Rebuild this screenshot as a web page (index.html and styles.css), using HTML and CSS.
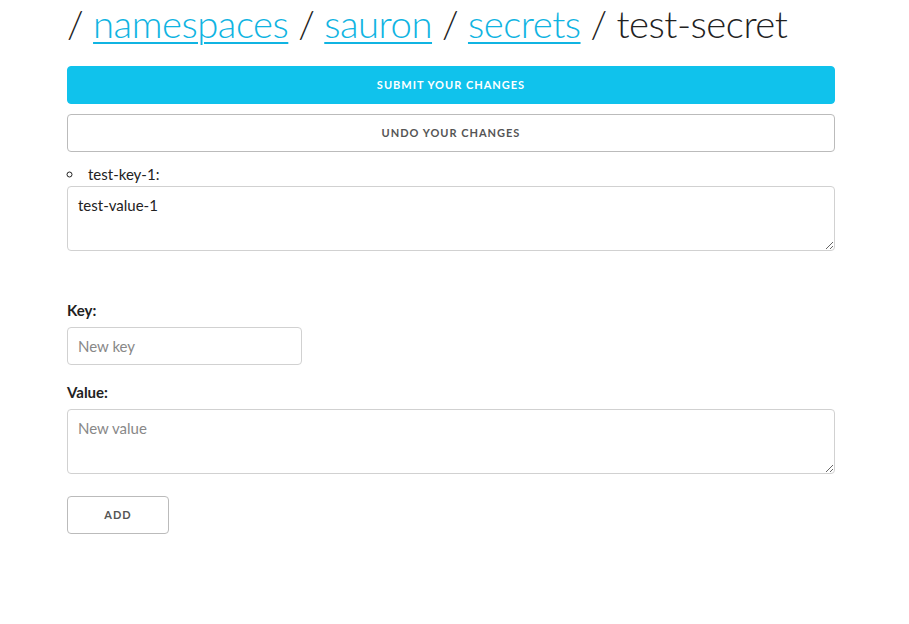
FILE: index.html
```html
<!DOCTYPE html>
<html>
<head>
<meta charset="utf-8">
<link rel="stylesheet" href="styles.css">
</head>
<body>
<div class="container">
  <h1 class="title">/ <a href="#">namespaces</a> / <a href="#">sauron</a> / <a href="#">secrets</a> / test-secret</h1>
  <button class="btn btn-primary">Submit your changes</button>
  <button class="btn">Undo your changes</button>
  <ul class="entries">
    <li>test-key-1:
      <textarea class="field field-area">test-value-1</textarea>
    </li>
  </ul>
  <form class="add-form">
    <label class="lbl">Key:</label>
    <input class="field field-key" type="text" placeholder="New key">
    <label class="lbl">Value:</label>
    <textarea class="field field-area" placeholder="New value"></textarea>
    <button type="button" class="btn btn-small">Add</button>
  </form>
</div>
</body>
</html>
```
FILE: styles.css
```css
html, body {
  margin: 0;
  padding: 0;
  background: #fff;
}
body {
  font-family: Lato, "Open Sans", sans-serif;
  font-size: 15px;
  line-height: 24px;
  color: #222;
}
.container {
  width: 768px;
  margin-left: 67px;
  display: flex;
  flex-direction: column;
  align-items: flex-start;
}
.title {
  margin: 3px 0 23px 0;
  font-weight: 300;
  font-size: 38.3px;
  line-height: 40px;
  letter-spacing: -0.5px;
  color: #222;
  white-space: nowrap;
}
.title a {
  color: #10b4e2;
  text-decoration: underline;
  text-decoration-thickness: 2px;
  text-underline-offset: 4px;
}
.btn {
  box-sizing: border-box;
  width: 100%;
  height: 38px;
  margin: 0 0 10px 0;
  padding: 0 30px;
  border: 1px solid #bbb;
  border-radius: 4px;
  background: #fff;
  color: #555;
  font-family: Lato, "Open Sans", sans-serif;
  font-size: 11px;
  font-weight: 700;
  letter-spacing: 1px;
  text-transform: uppercase;
  line-height: 36px;
  text-align: center;
}
.btn-primary {
  background: #10c2ec;
  border-color: #10c2ec;
  color: #fff;
}
.btn-small {
  width: 102px;
  margin: 22px 0 0 0;
}
.entries {
  list-style: circle inside;
  margin: 0 0 47px 0;
  padding: 0;
  width: 100%;
}
.entries li {
  margin: 0;
}
.field {
  box-sizing: border-box;
  display: block;
  border: 1px solid #d1d1d1;
  border-radius: 4px;
  padding: 6px 10px;
  font-family: Lato, "Open Sans", sans-serif;
  font-size: 15px;
  line-height: 24px;
  color: #222;
  background: #fff;
  margin: 0;
}
.field::placeholder {
  color: #888;
}
.field-area {
  width: 100%;
  height: 65px;
  resize: vertical;
}
.field-key {
  width: 235px;
  height: 38px;
  margin-bottom: 15px;
}
.add-form {
  width: 100%;
  display: flex;
  flex-direction: column;
  align-items: flex-start;
}
.lbl {
  display: block;
  font-weight: 700;
  color: #222;
  margin: 0 0 5px 0;
  line-height: 24px;
}
```
